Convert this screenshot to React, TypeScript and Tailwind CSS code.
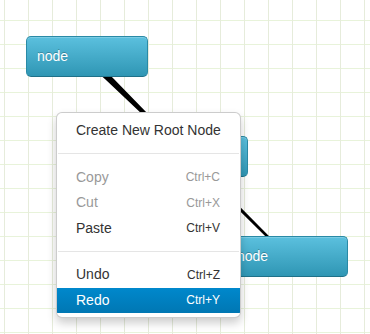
import React from "react";

const nodeCls =
  "absolute w-[122px] h-[41px] rounded-[5px] border border-[#2a8aa6] border-b-[#1f7189] bg-[linear-gradient(to_bottom,#5bc0de,#2f96b4)] text-white text-[14px] leading-[39px] pl-[10px] [text-shadow:0_-1px_0_rgba(0,0,0,0.25)] shadow-[inset_0_1px_0_rgba(255,255,255,0.2)]";

function Item({
  label,
  shortcut,
  disabled,
  active,
}: {
  label: string;
  shortcut?: string;
  disabled?: boolean;
  active?: boolean;
}) {
  const color = active
    ? "text-white bg-[linear-gradient(to_bottom,#0088cc,#0077b3)]"
    : disabled
    ? "text-[#999999]"
    : "text-[#333333]";
  return (
    <div className={`flex items-center justify-between whitespace-nowrap h-[25.5px] pl-[19px] pr-[20px] ${color}`}>
      <span className="text-[14px] shrink-0">{label}</span>
      {shortcut && <span className="text-[12px]">{shortcut}</span>}
    </div>
  );
}

function Sep() {
  return (
    <div className="h-[21px] pt-[9.5px]">
      <div className="h-px bg-[#e5e5e5] mx-px" />
    </div>
  );
}

export default function App() {
  return (
    <div
      className="relative w-[370px] h-[334px] overflow-hidden bg-white bg-[linear-gradient(to_right,#e6ecdb_1px,transparent_1px),linear-gradient(to_bottom,#e8f3da_1px,transparent_1px)] bg-[length:24px_24px] bg-size-[24px_24px] bg-[position:4px_20px] bg-position-[4px_20px]"
      style={{ fontFamily: '"Liberation Sans", Arial, sans-serif' }}
    >
      <svg className="absolute left-0 top-0" width="370" height="334">
        <polygon
          points="102.5,67.5 109.8,74.7 144.6,110.4 268.9,236.1 267.1,237.9 141.4,113.6 105.2,79.3 97.5,72.5"
          fill="#000"
        />
      </svg>

      <div className={`${nodeCls} left-[26px] top-[36px]`}>node</div>
      <div className={`${nodeCls} left-[126px] top-[136px]`}>node</div>
      <div className={`${nodeCls} left-[226px] top-[236px]`}>node</div>

      <div className="absolute left-[56px] top-[112px] w-[185px] h-[206px] flex flex-col bg-white border border-[rgba(0,0,0,0.2)] rounded-[6px] shadow-[0_5px_10px_rgba(0,0,0,0.2)] pt-[5px] pb-[4px] overflow-hidden">
        <Item label="Create New Root Node" />
        <Sep />
        <Item label="Copy" shortcut="Ctrl+C" disabled />
        <Item label="Cut" shortcut="Ctrl+X" disabled />
        <Item label="Paste" shortcut="Ctrl+V" />
        <Sep />
        <Item label="Undo" shortcut="Ctrl+Z" />
        <Item label="Redo" shortcut="Ctrl+Y" active />
      </div>
    </div>
  );
}
